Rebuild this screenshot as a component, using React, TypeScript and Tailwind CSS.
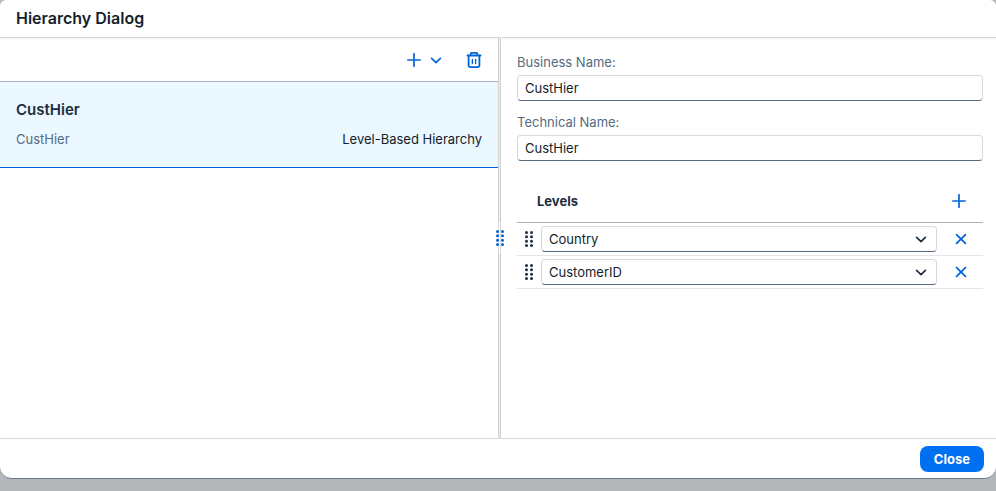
import { useState } from "react";
import type { ReactNode } from "react";

function PlusIcon() {
  return (
    <svg width="14" height="14" viewBox="0 0 14 14" fill="none" stroke="currentColor" strokeWidth="1.7" strokeLinecap="round" aria-hidden="true">
      <path d="M7 0.8V13.2M0.8 7H13.2" />
    </svg>
  );
}

function ChevronIcon() {
  return (
    <svg width="12" height="8" viewBox="0 0 12 8" fill="none" stroke="currentColor" strokeWidth="1.7" strokeLinecap="round" strokeLinejoin="round" aria-hidden="true">
      <path d="M1.6 2.4L6 6.6L10.4 2.4" />
    </svg>
  );
}

function TrashIcon() {
  return (
    <svg width="16" height="16" viewBox="0 0 16 16" fill="none" stroke="currentColor" strokeWidth="1.8" strokeLinecap="round" strokeLinejoin="round" aria-hidden="true">
      <path d="M1.5 3.5H14.5M4.7 3.5V1.6Q4.7 0.9 5.4 0.9H10.6Q11.3 0.9 11.3 1.6V3.5" />
      <path d="M2.6 3.6V13.6Q2.6 15.1 4.1 15.1H11.9Q13.4 15.1 13.4 13.6V3.6" />
      <path d="M6.4 7.5V11.5M9.6 7.5V11.5" strokeWidth="1.4" />
    </svg>
  );
}

function CloseIcon() {
  return (
    <svg width="12" height="12" viewBox="0 0 12 12" fill="none" stroke="currentColor" strokeWidth="1.8" strokeLinecap="round" aria-hidden="true">
      <path d="M1.6 1.6L10.4 10.4M10.4 1.6L1.6 10.4" />
    </svg>
  );
}

function GripIcon() {
  return (
    <svg width="8" height="16" viewBox="0 0 8 16" fill="currentColor" aria-hidden="true">
      {[1.5, 6.5].map((x) =>
        [1.5, 5.7, 10.3, 14.5].map((y) => <circle key={`${x}-${y}`} cx={x} cy={y} r="1.5" />)
      )}
    </svg>
  );
}

function IconButton({ label, className = "", children }: { label: string; className?: string; children: ReactNode }) {
  return (
    <button type="button" aria-label={label} className={`flex shrink-0 items-center justify-center text-[#0064d9] ${className}`}>
      {children}
    </button>
  );
}

function Field({ id, label, initial }: { id: string; label: string; initial: string }) {
  const [value, setValue] = useState(initial);
  return (
    <div className="flex h-15 flex-col">
      <label htmlFor={id} className="pb-[3px] leading-5 text-[#556b82]">{label}</label>
      <input
        id={id}
        value={value}
        onChange={(e) => setValue(e.target.value)}
        className="h-[26px] w-full rounded border border-[#d5dadf] border-b-[#556b81] bg-white px-[7px] outline-none"
      />
    </div>
  );
}

const columns = ["Country", "CustomerID"];

function LevelRow({ initial, index }: { initial: string; index: number }) {
  const [value, setValue] = useState(initial);
  return (
    <li className="flex h-[33px] items-center border-b border-[#e5e5e5] pl-2">
      <span className="mr-2 cursor-grab text-[#1d2d3e]"><GripIcon /></span>
      <div className="grid min-w-0 flex-1 items-center">
        <select
          aria-label={`Level ${index + 1}`}
          value={value}
          onChange={(e) => setValue(e.target.value)}
          className="col-start-1 row-start-1 h-[26px] w-full appearance-none rounded border border-[#d5dadf] border-b-[#556b81] bg-white px-[7px] outline-none"
        >
          {columns.map((c) => <option key={c}>{c}</option>)}
        </select>
        <span className="pointer-events-none col-start-1 row-start-1 mr-[10px] justify-self-end text-[#1d2d3e]"><ChevronIcon /></span>
      </div>
      <IconButton label={`Remove level ${index + 1}`} className="ml-2 mr-1.5 h-6 w-8"><CloseIcon /></IconButton>
    </li>
  );
}

export default function App() {
  return (
    <div className="flex h-screen flex-col bg-[#b4b6ba] pb-3 font-['Inter','Liberation_Sans',sans-serif] text-[13px] leading-5 text-[#131e29]">
      <section role="dialog" aria-labelledby="dialog-title" className="flex min-h-0 flex-1 flex-col overflow-hidden rounded-t-md rounded-b-xl border-b border-[#6b7a89] bg-white">
        <header className="relative flex h-[38px] shrink-0 items-center border-b border-[#d9d9d9] px-4 pb-[2px] shadow-[0_1px_2px_#0000000f]">
          <h1 id="dialog-title" className="text-base font-semibold">Hierarchy Dialog</h1>
        </header>

        <div className="flex min-h-0 flex-1">
          <div className="flex w-1/2 shrink-0 flex-col">
            <div className="flex h-11 items-center justify-end border-b border-[#a8b3bd] pr-3">
              <IconButton label="Add hierarchy" className="h-6 w-6"><PlusIcon /></IconButton>
              <IconButton label="More hierarchy types" className="mr-4 h-6 w-5"><ChevronIcon /></IconButton>
              <IconButton label="Delete hierarchy" className="h-6 w-6"><TrashIcon /></IconButton>
            </div>
            <ul>
              <li aria-current="true" className="flex h-[86px] flex-col gap-[9px] border-b border-[#0064d9] bg-[#ebf8ff] px-4 pt-[18px]">
                <h2 className="text-[15px] font-semibold text-[#1d2d3e]">CustHier</h2>
                <div className="flex justify-between">
                  <span className="text-[#556b82]">CustHier</span>
                  <span>Level-Based Hierarchy</span>
                </div>
              </li>
            </ul>
          </div>

          <div role="separator" aria-orientation="vertical" className="relative flex w-[3px] shrink-0 flex-col items-center justify-center border-x border-[#d2d2d2] bg-[#eeeeee]">
            <div className="absolute flex h-8 w-[3px] items-center justify-center border-x border-[#d9d9d9] bg-white text-[#0064d9]">
              <span className="shrink-0"><GripIcon /></span>
            </div>
          </div>

          <div className="min-w-0 flex-1 pl-4 pr-[13px] pt-[14px]">
            <Field id="business-name" label="Business Name:" initial="CustHier" />
            <Field id="technical-name" label="Technical Name:" initial="CustHier" />
            <div className="mt-[7px] flex h-11 items-center justify-between border-b border-[#a8b3bd] pl-5 pr-3">
              <h2 className="font-bold text-[#1d2d3e]">Levels</h2>
              <IconButton label="Add level" className="h-6 w-6"><PlusIcon /></IconButton>
            </div>
            <ul>
              {columns.map((c, i) => <LevelRow key={c} initial={c} index={i} />)}
            </ul>
          </div>
        </div>

        <footer className="flex h-10 shrink-0 items-center justify-end border-t border-[#d9d9d9] pr-3">
          <button type="button" className="h-[26px] rounded-lg bg-[#0070f2] px-[14px] font-bold text-white">Close</button>
        </footer>
      </section>
    </div>
  );
}
